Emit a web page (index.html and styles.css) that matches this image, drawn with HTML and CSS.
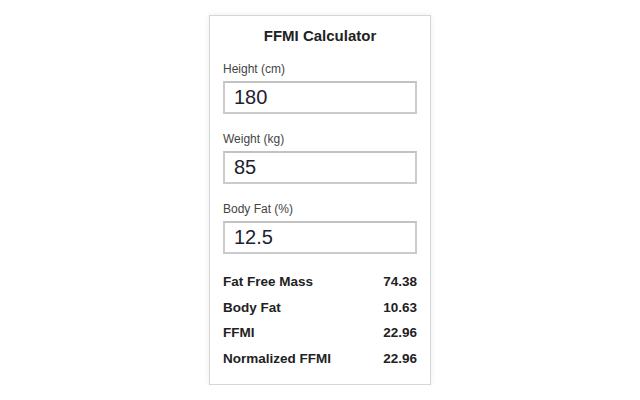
FILE: index.html
```html
<!DOCTYPE html>
<html lang="en">
  <head>
    <meta charset="UTF-8" />
    <meta name="viewport" content="width=device-width, initial-scale=1.0" />
    <title>FFMI Calculator</title>
    <link rel="stylesheet" href="styles.css">
  </head>
  <body>
    <div class="card">
      <h1 class="title">FFMI Calculator</h1>
      <div class="inputs">
        <div class="field">
          <label for="height">Height (cm)</label>
          <input type="text" id="height" value="180" />
        </div>
        <div class="field">
          <label for="weight">Weight (kg)</label>
          <input type="text" id="weight" value="85" />
        </div>
        <div class="field">
          <label for="bodyfat">Body Fat (%)</label>
          <input type="text" id="bodyfat" value="12.5" />
        </div>
      </div>
      <div class="results">
        <div class="row"><span>Fat Free Mass</span><span>74.38</span></div>
        <div class="row"><span>Body Fat</span><span>10.63</span></div>
        <div class="row"><span>FFMI</span><span>22.96</span></div>
        <div class="row"><span>Normalized FFMI</span><span>22.96</span></div>
      </div>
    </div>
  </body>
</html>
```

FILE: styles.css
```css
html,
body {
  margin: 0;
  padding: 0;
  background: #fff;
  font-family: "Liberation Sans", Arial, sans-serif;
  color: #222;
}

.card {
  width: 222px;
  box-sizing: border-box;
  margin: 15px auto 0;
  padding: 11px 13px 13px;
  border: 1px solid #d6d6d6;
  background: #fff;
  box-shadow: 0 0 6px rgba(0, 0, 0, 0.08);
}

.title {
  margin: 0 0 17px;
  font-size: 15px;
  line-height: 18px;
  font-weight: bold;
  text-align: center;
  color: #222;
}

.inputs {
  display: flex;
  flex-direction: column;
  gap: 18px;
  margin-bottom: 15px;
}

.field {
  display: flex;
  flex-direction: column;
  gap: 5px;
}

.field label {
  font-size: 12px;
  line-height: 14px;
  color: #444;
}

.field input {
  box-sizing: border-box;
  width: 100%;
  height: 33px;
  margin: 0;
  padding: 0 9px;
  border: 2px solid #cbcbcb;
  border-top-color: #c2c2c2;
  border-radius: 0;
  font-family: "Liberation Sans", Arial, sans-serif;
  font-size: 20px;
  color: #1c2230;
  outline: none;
}

.row {
  display: flex;
  justify-content: space-between;
  font-size: 13.5px;
  font-weight: bold;
  line-height: 25.5px;
  color: #222;
}
```
